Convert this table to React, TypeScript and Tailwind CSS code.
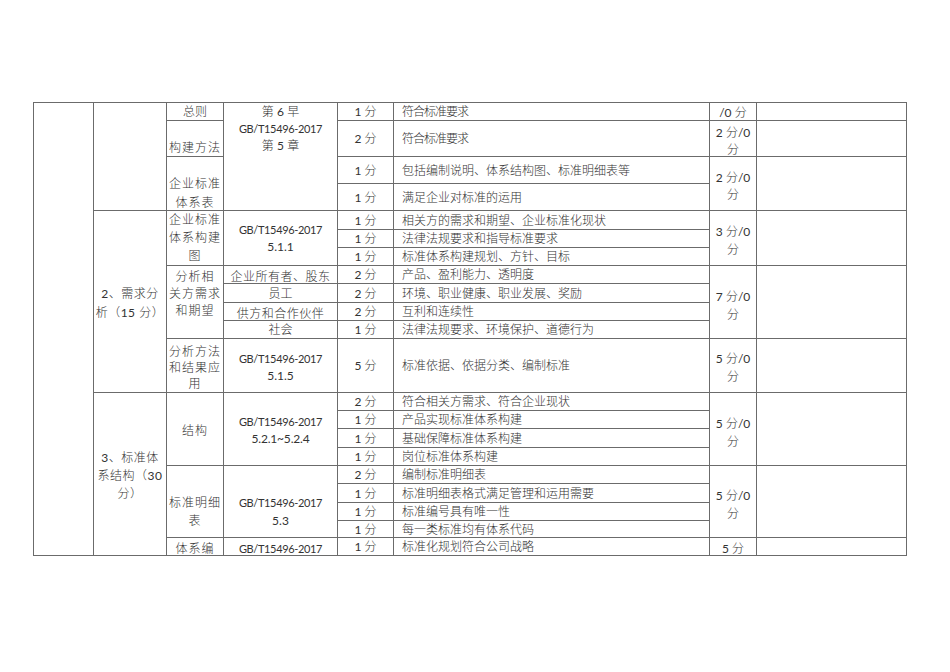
import React from "react";

const RS = [
  "",
  "row-start-1",
  "row-start-2",
  "row-start-3",
  "row-start-4",
  "row-start-5",
  "row-start-6",
  "row-start-7",
  "row-start-8",
  "row-start-9",
  "row-start-10",
  "row-start-11",
  "row-start-12",
  "row-start-13",
  "row-start-14",
  "row-start-15",
  "row-start-16",
  "row-start-17",
  "row-start-18",
  "row-start-19",
  "row-start-20",
  "row-start-21",
];

const items: [string, string][] = [
  ["1 分", "符合标准要求"],
  ["2 分", "符合标准要求"],
  ["1 分", "包括编制说明、体系结构图、标准明细表等"],
  ["1 分", "满足企业对标准的运用"],
  ["1 分", "相关方的需求和期望、企业标准化现状"],
  ["1 分", "法律法规要求和指导标准要求"],
  ["1 分", "标准体系构建规划、方针、目标"],
  ["2 分", "产品、盈利能力、透明度"],
  ["2 分", "环境、职业健康、职业发展、奖励"],
  ["2 分", "互利和连续性"],
  ["1 分", "法律法规要求、环境保护、道德行为"],
  ["5 分", "标准依据、依据分类、编制标准"],
  ["2 分", "符合相关方需求、符合企业现状"],
  ["1 分", "产品实现标准体系构建"],
  ["1 分", "基础保障标准体系构建"],
  ["1 分", "岗位标准体系构建"],
  ["2 分", "编制标准明细表"],
  ["1 分", "标准明细表格式满足管理和运用需要"],
  ["1 分", "标准编号具有唯一性"],
  ["1 分", "每一类标准均有体系代码"],
  ["1 分", "标准化规划符合公司战略"],
];

const B = "border-r border-b border-[#6b6b6b] overflow-hidden";
const C = "flex justify-center text-center";
const GB = "GB/T15496-2017";

function Lines({ lines }: { lines: React.ReactNode[] }) {
  return (
    <div>
      {lines.map((l, i) => (
        <div key={i} className="whitespace-nowrap">
          {l}
        </div>
      ))}
    </div>
  );
}

function G({ children }: { children: React.ReactNode }) {
  return <span className="text-[11px] font-normal tracking-[-0.35px]">{children}</span>;
}

function N({ children }: { children: React.ReactNode }) {
  return <span className="font-normal">{children}</span>;
}

export default function App() {
  return (
    <div className="w-[950px] h-[672px] bg-white pt-[102px] pl-[33px] font-['Lato','Noto_Sans_CJK_SC',sans-serif] font-light text-[12px] leading-[17px] text-[#333]">
      <div className="grid w-max border-t border-l border-[#6b6b6b] grid-cols-[60px_73px_57px_114px_56px_316px_47px_150px] grid-rows-[18px_36px_27px_27px_19px_18px_18px_18px_19px_18px_18px_54px_18px_18px_19px_18px_18px_19px_18px_17px_18px]">
        {/* col 1 */}
        <div className={`${B} row-start-1 row-span-21 col-start-1`} />

        {/* col 2 */}
        <div className={`${B} row-start-1 row-span-4 col-start-2`} />
        <div className={`${B} ${C} items-center row-start-5 row-span-8 col-start-2 leading-[19px] pt-[2px] tracking-[0.5px]`}>
          <Lines lines={[<span key="a"><N>2</N>、需求分</span>, <span key="b">析（<N>15</N> 分）</span>]} />
        </div>
        <div className={`${B} ${C} items-center row-start-13 row-span-9 col-start-2 leading-[18px] pt-[3px] tracking-[0.5px]`}>
          <Lines lines={[<span key="a"><N>3</N>、标准体</span>, <span key="b">系结构（<N>30</N></span>, "分）"]} />
        </div>

        {/* col 3 */}
        <div className={`${B} ${C} items-center row-start-1 col-start-3`}>总则</div>
        <div className={`${B} ${C} items-end row-start-2 col-start-3 tracking-[1px]`}>构建方法</div>
        <div className={`${B} ${C} items-start row-start-3 row-span-2 col-start-3 pt-[17px] leading-[19px] tracking-[1px]`}>
          <Lines lines={["企业标准", "体系表"]} />
        </div>
        <div className={`${B} ${C} items-start row-start-5 row-span-3 col-start-3 leading-[18px] tracking-[1px]`}>
          <Lines lines={["企业标准", "体系构建", "图"]} />
        </div>
        <div className={`${B} ${C} items-start row-start-8 row-span-4 col-start-3 pt-[2px] leading-[17px] tracking-[1px]`}>
          <Lines lines={["分析相", "关方需求", "和期望"]} />
        </div>
        <div className={`${B} ${C} items-start row-start-12 col-start-3 pt-[5px] leading-[16px] tracking-[1px]`}>
          <Lines lines={["分析方法", "和结果应", "用"]} />
        </div>
        <div className={`${B} ${C} items-center row-start-13 row-span-4 col-start-3 pt-[3px] tracking-[1px]`}>结构</div>
        <div className={`${B} ${C} items-center row-start-17 row-span-4 col-start-3 pt-[20px] leading-[18px] tracking-[1px]`}>
          <Lines lines={["标准明细", "表"]} />
        </div>
        <div className={`${B} ${C} items-center row-start-21 col-start-3 pt-[3px] tracking-[1px]`}>体系编</div>

        {/* col 4 */}
        <div className={`${B} ${C} items-start row-start-1 row-span-4 col-start-4`}>
          <Lines lines={[<span key="a">第 <N>6</N> 早</span>, <G key="g">{GB}</G>, <span key="c">第 <N>5</N> 章</span>]} />
        </div>
        <div className={`${B} ${C} items-center row-start-5 row-span-3 col-start-4`}>
          <Lines lines={[<G key="g">{GB}</G>, <N key="h">5.1.1</N>]} />
        </div>
        <div className={`${B} ${C} items-center row-start-8 col-start-4 pt-[3px] tracking-[0.5px]`}>企业所有者、股东</div>
        <div className={`${B} ${C} items-center row-start-9 col-start-4`}>员工</div>
        <div className={`${B} ${C} items-center row-start-10 col-start-4 pt-[3px] tracking-[0.5px]`}>供方和合作伙伴</div>
        <div className={`${B} ${C} items-center row-start-11 col-start-4`}>社会</div>
        <div className={`${B} ${C} items-center row-start-12 col-start-4 pt-[2px]`}>
          <Lines lines={[<G key="g">{GB}</G>, <N key="h">5.1.5</N>]} />
        </div>
        <div className={`${B} ${C} items-center row-start-13 row-span-4 col-start-4 pt-[2px]`}>
          <Lines lines={[<G key="g">{GB}</G>, <span key="h" className="font-normal tracking-[-0.2px]">5.2.1~5.2.4</span>]} />
        </div>
        <div className={`${B} ${C} items-center row-start-17 row-span-4 col-start-4 pt-[20px] leading-[18px]`}>
          <Lines lines={[<G key="g">{GB}</G>, <N key="h">5.3</N>]} />
        </div>
        <div className={`${B} ${C} items-center row-start-21 col-start-4 pt-[3px]`}>
          <G>{GB}</G>
        </div>

        {/* col 5 & 6 */}
        {items.map(([score, desc], i) => (
          <React.Fragment key={i}>
            <div className={`${B} ${C} items-center ${RS[i + 1]} col-start-5`}>
              <span>
                <N>{score.split(" ")[0]}</N> 分
              </span>
            </div>
            <div
              className={`${B} flex items-center pl-[8px] whitespace-nowrap ${RS[i + 1]} col-start-6 ${
                i < 2 ? "tracking-[-1px]" : ""
              }`}
            >
              {desc}
            </div>
          </React.Fragment>
        ))}

        {/* col 7 */}
        <div className={`${B} ${C} items-center row-start-1 col-start-7 pt-[2px]`}>
          <span><N>/0</N> 分</span>
        </div>
        <div className={`${B} ${C} items-center row-start-2 col-start-7 pt-[4px]`}>
          <Lines lines={[<span key="a"><N>2</N> 分<N>/0</N></span>, "分"]} />
        </div>
        <div className={`${B} ${C} items-center row-start-3 row-span-2 col-start-7 pt-[5px]`}>
          <Lines lines={[<span key="a"><N>2</N> 分<N>/0</N></span>, "分"]} />
        </div>
        <div className={`${B} ${C} items-center row-start-5 row-span-3 col-start-7 pt-[5px] leading-[18px]`}>
          <Lines lines={[<span key="a"><N>3</N> 分<N>/0</N></span>, "分"]} />
        </div>
        <div className={`${B} ${C} items-center row-start-8 row-span-4 col-start-7 pt-[7px] leading-[18px]`}>
          <Lines lines={[<span key="a"><N>7</N> 分<N>/0</N></span>, "分"]} />
        </div>
        <div className={`${B} ${C} items-center row-start-12 col-start-7 pt-[5px] leading-[18px]`}>
          <Lines lines={[<span key="a"><N>5</N> 分<N>/0</N></span>, "分"]} />
        </div>
        <div className={`${B} ${C} items-center row-start-13 row-span-4 col-start-7 pt-[7px] leading-[18px]`}>
          <Lines lines={[<span key="a"><N>5</N> 分<N>/0</N></span>, "分"]} />
        </div>
        <div className={`${B} ${C} items-center row-start-17 row-span-4 col-start-7 pt-[6px] leading-[18px]`}>
          <Lines lines={[<span key="a"><N>5</N> 分<N>/0</N></span>, "分"]} />
        </div>
        <div className={`${B} ${C} items-center row-start-21 col-start-7 pt-[3px]`}>
          <span><N>5</N> 分</span>
        </div>

        {/* col 8 */}
        <div className={`${B} row-start-1 col-start-8`} />
        <div className={`${B} row-start-2 col-start-8`} />
        <div className={`${B} row-start-3 row-span-2 col-start-8`} />
        <div className={`${B} row-start-5 row-span-3 col-start-8`} />
        <div className={`${B} row-start-8 row-span-4 col-start-8`} />
        <div className={`${B} row-start-12 col-start-8`} />
        <div className={`${B} row-start-13 row-span-4 col-start-8`} />
        <div className={`${B} row-start-17 row-span-4 col-start-8`} />
        <div className={`${B} row-start-21 col-start-8`} />
      </div>
    </div>
  );
}
